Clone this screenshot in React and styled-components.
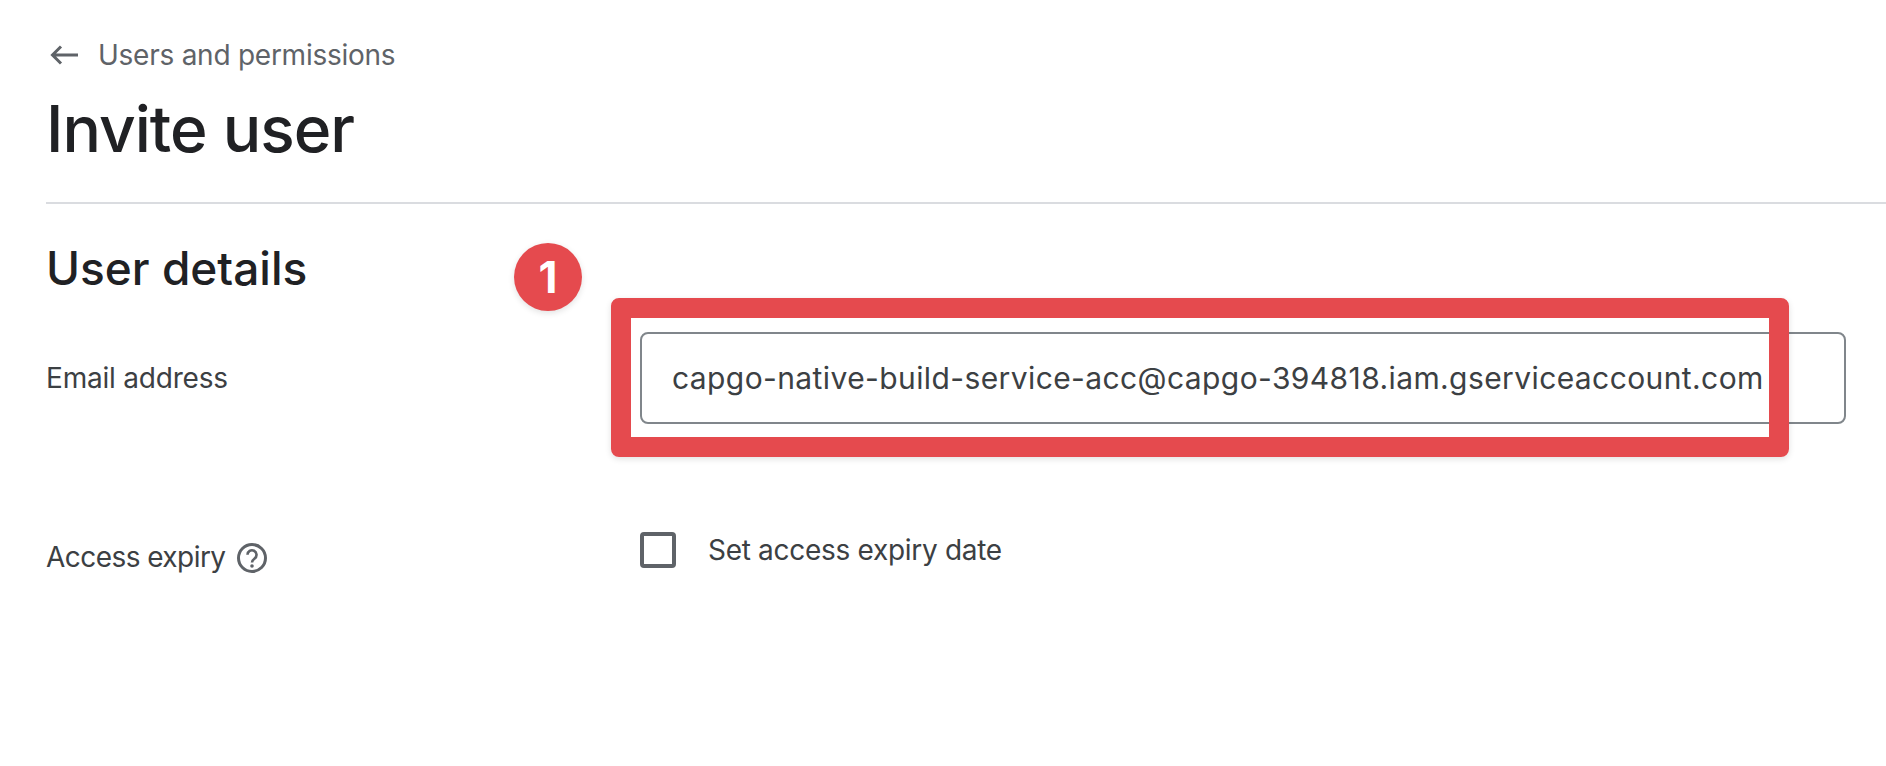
import React from "react";
import styled, { createGlobalStyle } from "styled-components";

const Global = createGlobalStyle`
  html, body { margin: 0; padding: 0; background: #fff; }
  body { font-family: "Inter", "Roboto", "Liberation Sans", sans-serif; overflow: hidden; }
  * { box-sizing: border-box; }
`;

const Page = styled.div`
  position: relative;
  width: 1886px;
  height: 766px;
  padding: 36px 0 0 46px;
  overflow: hidden;
`;

const BackLink = styled.div`
  display: flex;
  align-items: center;
  gap: 18px;
  height: 38px;
  padding-left: 4px;
  color: #5f6368;
  font-size: 28px;
  letter-spacing: -0.25px;
`;

const Title = styled.h1`
  margin: 16px 0 0;
  height: 78px;
  color: #202124;
  font-size: 64px;
  line-height: 78px;
  font-weight: 500;
  letter-spacing: -1px;
`;

const Divider = styled.div`
  height: 2px;
  margin-top: 34px;
  background: #dadce0;
`;

const SectionTitle = styled.h2`
  margin: 37px 0 0;
  height: 54px;
  color: #202124;
  font-size: 46px;
  line-height: 54px;
  font-weight: 500;
  letter-spacing: 0;
`;

const Row = styled.div`
  display: grid;
  grid-template-columns: 594px 1206px;
  align-items: ${p => p.$align || "center"};
  margin-top: ${p => p.$top}px;
`;

const Label = styled.div`
  display: flex;
  align-items: center;
  gap: 10px;
  padding-top: ${p => p.$offset || 0}px;
  color: #3c4043;
  font-size: 28px;
  letter-spacing: ${p => p.$tight ? "-0.55px" : "-0.2px"};
`;

const Input = styled.div`
  display: flex;
  align-items: center;
  height: 92px;
  padding-left: 30px;
  border: 2px solid #80868b;
  border-radius: 8px;
  color: #3c4043;
  font-size: 30px;
  letter-spacing: 0.4px;
  white-space: nowrap;
`;

const CheckRow = styled.div`
  display: flex;
  align-items: center;
  gap: 32px;
  color: #3c4043;
  font-size: 28px;
  letter-spacing: -0.3px;
`;

const Check = styled.span`
  width: 36px;
  height: 36px;
  border: 4px solid #5f6368;
  border-radius: 4px;
`;

const Highlight = styled.div`
  position: absolute;
  left: 611px;
  top: 298px;
  width: 1178px;
  height: 159px;
  border: 20px solid #e54a4e;
  border-radius: 8px;
  box-shadow: 0 2px 6px rgba(0, 0, 0, 0.12);
  pointer-events: none;
`;

const Badge = styled.div`
  position: absolute;
  left: 514px;
  top: 243px;
  width: 68px;
  height: 68px;
  display: flex;
  align-items: center;
  justify-content: center;
  border-radius: 50%;
  background: #e54a4e;
  color: #fff;
  font-size: 44px;
  font-weight: 700;
  box-shadow: 0 2px 6px rgba(0, 0, 0, 0.12);
`;

const HelpSvg = styled.svg`
  margin-top: 3px;
`;

const BackArrow = () => (
  <svg width="30" height="22" viewBox="0 0 30 22" fill="none" stroke="#5f6368" strokeWidth="3">
    <path d="M28 11H3M11 2.5 2.5 11l8.5 8.5" />
  </svg>
);

const HelpIcon = () => (
  <HelpSvg width="32" height="32" viewBox="0 0 32 32" fill="none">
    <circle cx="16" cy="16" r="13.5" stroke="#5f6368" strokeWidth="3" />
    <path d="M11.5 12.8a4.5 4.5 0 1 1 7.2 3.6c-1.6 1.2-2.7 2-2.7 4" stroke="#5f6368" strokeWidth="2.6" />
    <circle cx="16" cy="24" r="1.8" fill="#5f6368" />
  </HelpSvg>
);

export default function App() {
  return (
    <>
      <Global />
      <Page>
        <BackLink>
          <BackArrow />
          Users and permissions
        </BackLink>
        <Title>Invite user</Title>
        <Divider />
        <SectionTitle>User details</SectionTitle>
        <Row $top={37}>
          <Label>Email address</Label>
          <Input>capgo-native-build-service-acc@capgo-394818.iam.gserviceaccount.com</Input>
        </Row>
        <Row $top={108} $align="start">
          <Label $offset={7} $tight>Access expiry <HelpIcon /></Label>
          <CheckRow>
            <Check />
            Set access expiry date
          </CheckRow>
        </Row>
        <Highlight />
        <Badge>1</Badge>
      </Page>
    </>
  );
}
